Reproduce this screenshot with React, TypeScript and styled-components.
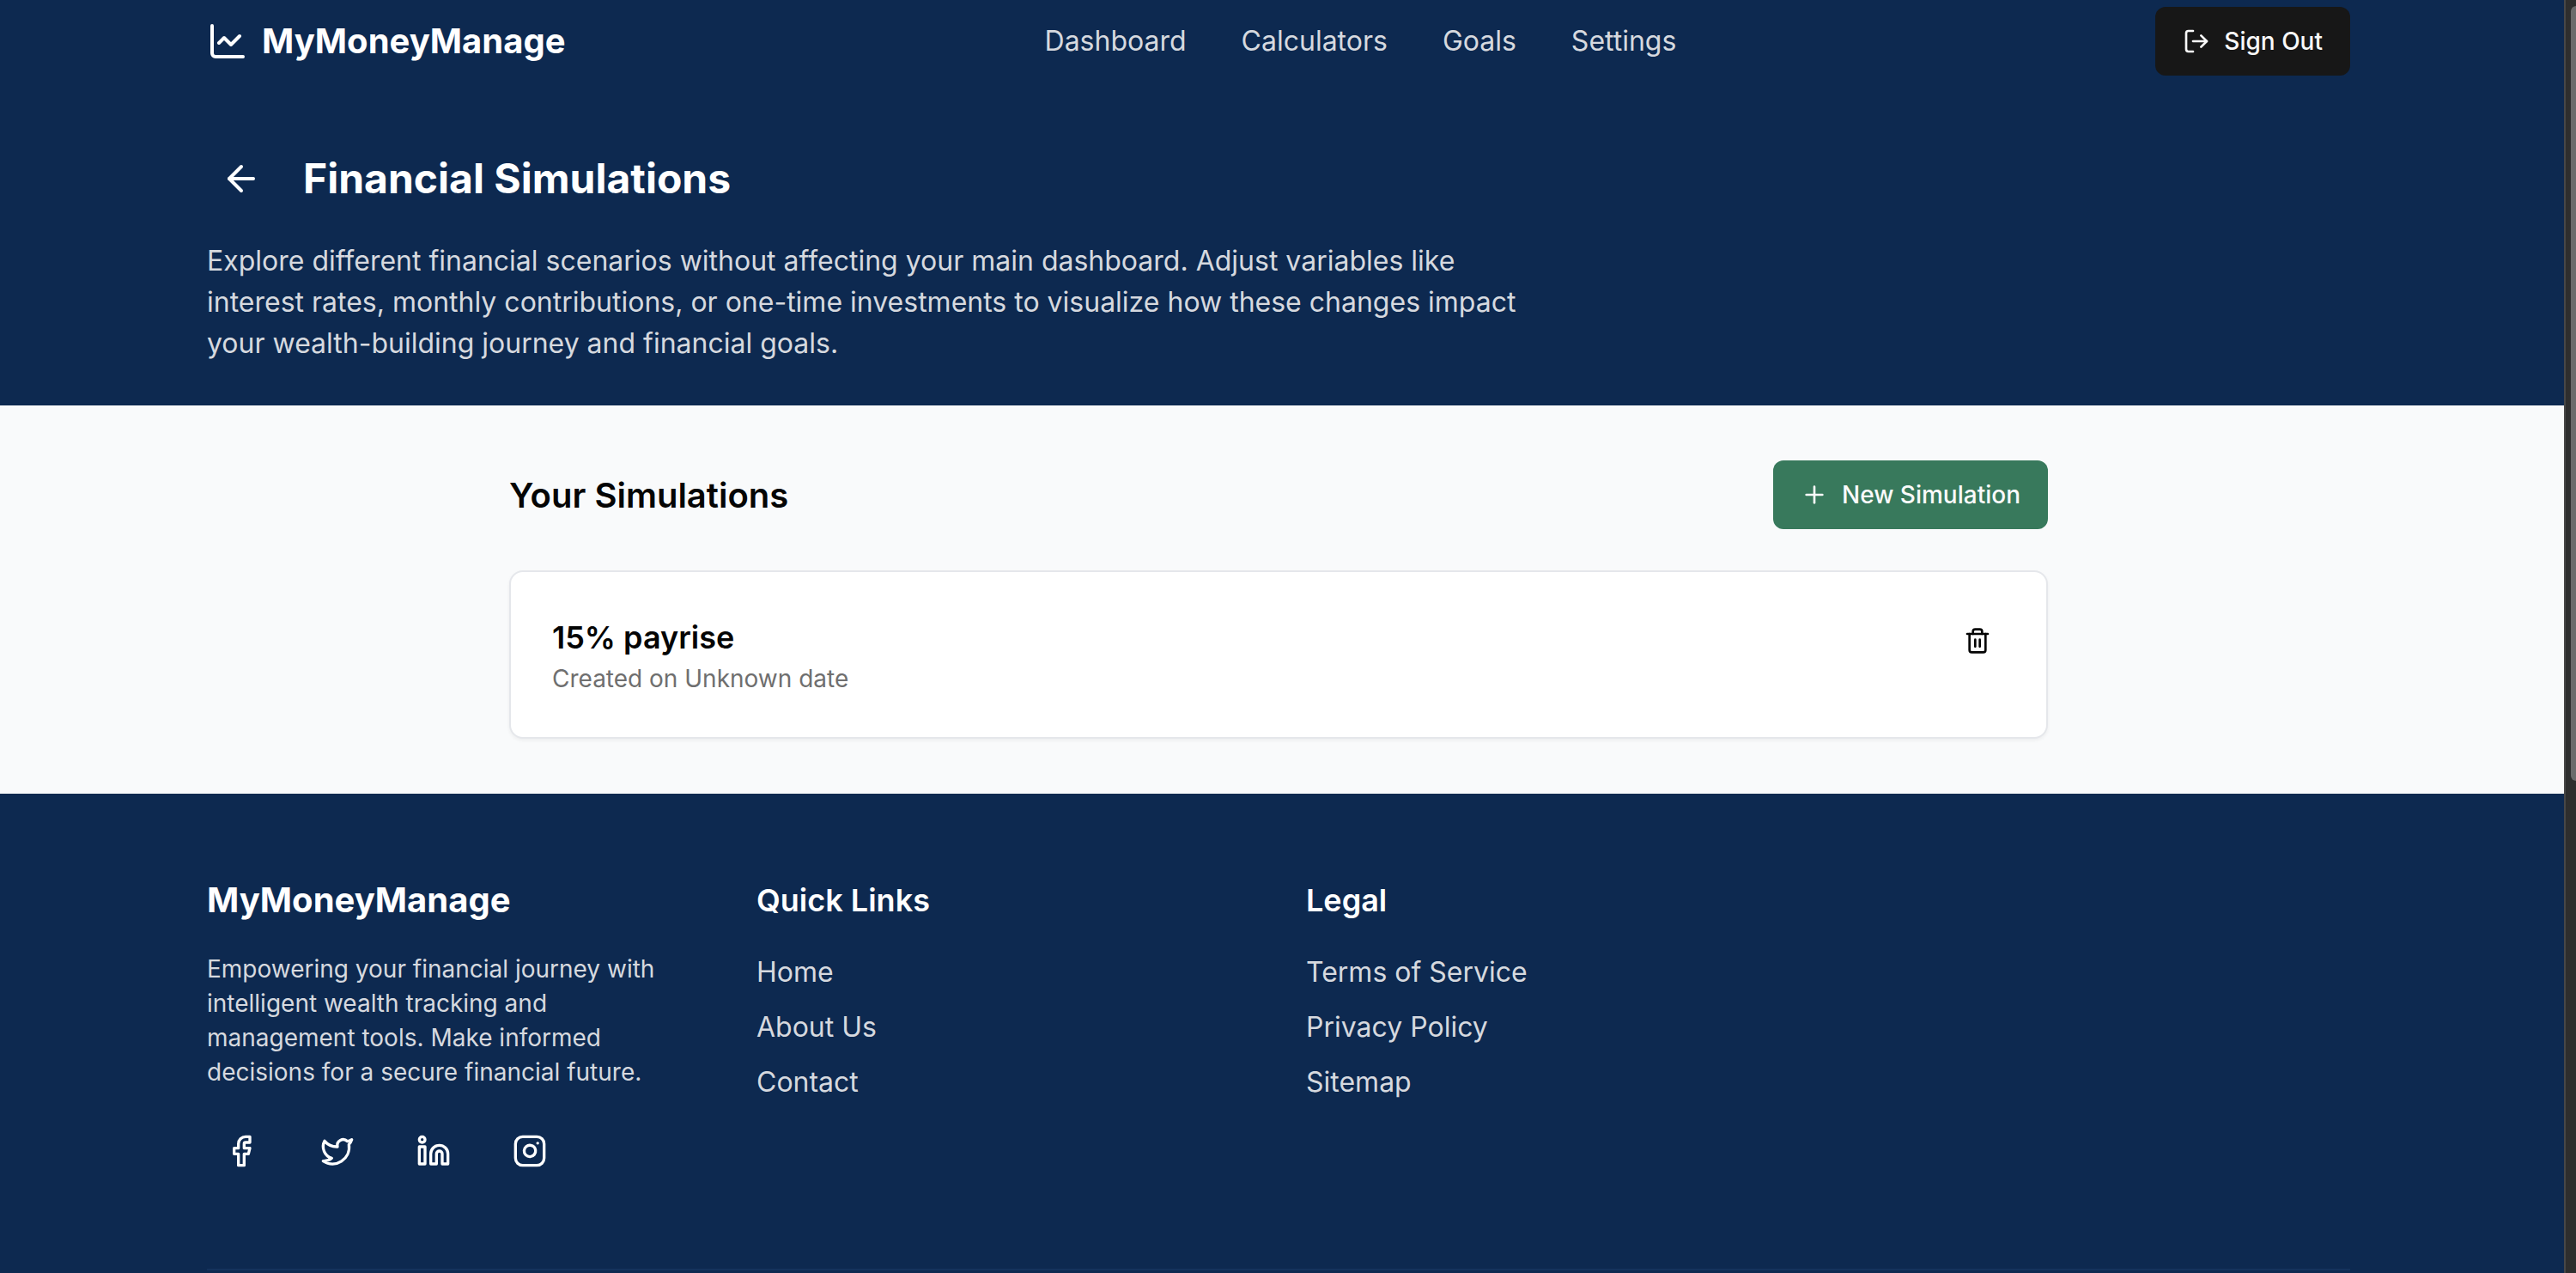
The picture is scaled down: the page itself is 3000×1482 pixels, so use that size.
import React from 'react';
import styled, { createGlobalStyle } from 'styled-components';
import { ArrowLeft, ChartLine, Facebook, Instagram, Linkedin, LogOut, Plus, Trash2, Twitter } from 'lucide-react';

const navy = '#0d2950';
const muted = '#d6d9df';
const ink = '#050505';

const GlobalStyle = createGlobalStyle`
    html, body {
        margin: 0;
        padding: 0;
        overflow: hidden;
        background: ${navy};
    }

    * { box-sizing: border-box; }

    body {
        font-family: Inter, "Noto Sans", sans-serif;
    }
`;

/* Page frame */
const Frame = styled.div`
    width: 3000px;
    height: 1482px;
    overflow: hidden;
    display: flex;
    flex-flow: row nowrap;
`;

const Page = styled.div`
    flex: 1;
    min-width: 0;
    display: flex;
    flex-flow: column nowrap;
`;

const ScrollTrack = styled.div`
    width: 14px;
    height: 100%;
    padding: 7px 0 0 6px;
    background: #2e2e2e;
    border-left: 2px solid #474747;
`;

const ScrollThumb = styled.div`
    width: 6px;
    height: 902px;
    background: #6b6b6b;
    border-radius: 6px 0 0 6px;
`;

/* Header */
const Hero = styled.header`
    background: ${navy};
    padding-bottom: 48px;
`;

const Wide = styled.div`
    width: 2496px;
    margin-left: 241px;
`;

const NavBar = styled.nav`
    height: 96px;
    display: flex;
    align-items: center;
    justify-content: space-between;
`;

const Logo = styled.div`
    display: flex;
    align-items: center;
    gap: 16px;
    color: #fff;
    font-size: 40px;
    font-weight: 700;
    line-height: 56px;
`;

const NavLinks = styled.div`
    display: flex;
    gap: 64px;
    color: ${muted};
    font-size: 32px;
    line-height: 48px;
`;

const Button = styled.button<{ $bg: string }>`
    height: 80px;
    padding: 0 32px;
    border: 0;
    border-radius: 12px;
    background: ${p => p.$bg};
    color: #fafafa;
    font-family: inherit;
    font-size: 28px;
    font-weight: 500;
    display: flex;
    align-items: center;
    gap: 16px;
`;

const TitleRow = styled.div`
    margin-top: 72px;
    display: flex;
    align-items: center;
    gap: 32px;
`;

const IconButton = styled.div`
    width: 80px;
    height: 80px;
    color: #fff;
    display: flex;
    align-items: center;
    justify-content: center;
`;

const PageTitle = styled.h1`
    margin: 0;
    color: #fff;
    font-size: 48px;
    font-weight: 700;
    line-height: 64px;
`;

const Intro = styled.p`
    margin: 32px 0 0;
    max-width: 1536px;
    color: ${muted};
    font-size: 32px;
    line-height: 48px;
`;

/* Simulations */
const Content = styled.main`
    background: #f9fafb;
    padding: 64px 0;
`;

const Narrow = styled.div`
    width: 1792px;
    margin-left: 593px;
`;

const ListHeader = styled.div`
    margin-bottom: 48px;
    display: flex;
    align-items: center;
    justify-content: space-between;
`;

const ListTitle = styled.h2`
    margin: 0;
    color: ${ink};
    font-size: 40px;
    font-weight: 600;
`;

const Card = styled.div`
    padding: 48px;
    background: #fff;
    border: 2px solid #e5e7eb;
    border-radius: 16px;
    box-shadow: 0 2px 4px rgba(0, 0, 0, 0.05);
    display: flex;
    align-items: flex-start;
    justify-content: space-between;
`;

const CardTitle = styled.div`
    color: ${ink};
    font-size: 36px;
    font-weight: 600;
    line-height: 56px;
`;

const CardDate = styled.div`
    color: #6f6f6f;
    font-size: 28px;
    line-height: 40px;
`;

const DeleteButton = styled.div`
    width: 64px;
    height: 64px;
    color: ${ink};
    display: flex;
    align-items: center;
    justify-content: center;
`;

/* Footer */
const Footer = styled.footer`
    flex: 1;
    background: ${navy};
    padding-top: 96px;
`;

const FooterGrid = styled.div`
    display: grid;
    grid-template-columns: repeat(4, 576px);
    gap: 64px;
    margin-bottom: 97px;
`;

const FooterHeading = styled.h3<{ $size?: number; $weight?: number }>`
    margin: 0 0 32px;
    color: #fff;
    font-size: ${p => p.$size ?? 36}px;
    font-weight: ${p => p.$weight ?? 600};
    line-height: 56px;
`;

const FooterText = styled.p`
    margin: 0 0 32px;
    color: ${muted};
    font-size: 28px;
    line-height: 40px;
`;

const Socials = styled.div`
    display: flex;
    gap: 32px;
`;

const FooterLinks = styled.div`
    display: flex;
    flex-flow: column nowrap;
    gap: 16px;
    color: ${muted};
    font-size: 32px;
    line-height: 48px;
`;

const FooterRule = styled.div`
    height: 2px;
    background: #14325c;
`;

const navItems = ['Dashboard', 'Calculators', 'Goals', 'Settings'];
const quickLinks = ['Home', 'About Us', 'Contact'];
const legalLinks = ['Terms of Service', 'Privacy Policy', 'Sitemap'];
const socialIcons = [Facebook, Twitter, Linkedin, Instagram];

function App() {
    return (
        <Frame>
            <GlobalStyle />
            <Page>
                <Hero>
                    <Wide>
                        <NavBar>
                            <Logo>
                                <ChartLine size={48} />
                                MyMoneyManage
                            </Logo>
                            <NavLinks>
                                {navItems.map(item => <span key={item}>{item}</span>)}
                            </NavLinks>
                            <Button $bg="#171717">
                                <LogOut size={32} />
                                Sign Out
                            </Button>
                        </NavBar>
                        <TitleRow>
                            <IconButton>
                                <ArrowLeft size={48} />
                            </IconButton>
                            <PageTitle>Financial Simulations</PageTitle>
                        </TitleRow>
                        <Intro>
                            Explore different financial scenarios without affecting your main dashboard. Adjust variables like
                            interest rates, monthly contributions, or one-time investments to visualize how these changes impact
                            your wealth-building journey and financial goals.
                        </Intro>
                    </Wide>
                </Hero>

                <Content>
                    <Narrow>
                        <ListHeader>
                            <ListTitle>Your Simulations</ListTitle>
                            <Button $bg="#38795c">
                                <Plus size={32} />
                                New Simulation
                            </Button>
                        </ListHeader>
                        <Card>
                            <div>
                                <CardTitle>15% payrise</CardTitle>
                                <CardDate>Created on Unknown date</CardDate>
                            </div>
                            <DeleteButton>
                                <Trash2 size={32} />
                            </DeleteButton>
                        </Card>
                    </Narrow>
                </Content>

                <Footer>
                    <Wide>
                        <FooterGrid>
                            <div>
                                <FooterHeading $size={40} $weight={700}>MyMoneyManage</FooterHeading>
                                <FooterText>
                                    Empowering your financial journey with intelligent wealth tracking and management tools. Make informed decisions for a secure financial future.
                                </FooterText>
                                <Socials>
                                    {socialIcons.map((Icon, i) => (
                                        <IconButton key={i}>
                                            <Icon size={40} />
                                        </IconButton>
                                    ))}
                                </Socials>
                            </div>
                            <div>
                                <FooterHeading>Quick Links</FooterHeading>
                                <FooterLinks>
                                    {quickLinks.map(link => <span key={link}>{link}</span>)}
                                </FooterLinks>
                            </div>
                            <div>
                                <FooterHeading>Legal</FooterHeading>
                                <FooterLinks>
                                    {legalLinks.map(link => <span key={link}>{link}</span>)}
                                </FooterLinks>
                            </div>
                        </FooterGrid>
                        <FooterRule />
                    </Wide>
                </Footer>
            </Page>
            <ScrollTrack>
                <ScrollThumb />
            </ScrollTrack>
        </Frame>
    );
}

export default App;
